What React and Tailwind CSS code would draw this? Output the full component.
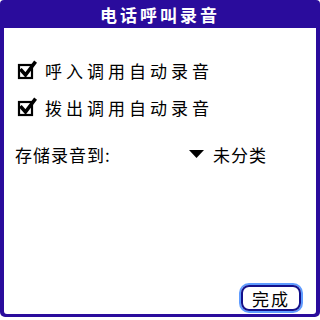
import React from "react";

function Check() {
  return (
    <svg width="20" height="20" viewBox="0 0 20 20" className="shrink-0">
      <rect x="2" y="5" width="13" height="13" fill="white" stroke="black" strokeWidth="2.2" />
      <path d="M4.5 10.5 L8.5 15 L17.5 3" fill="none" stroke="black" strokeWidth="3.6" strokeLinecap="square" strokeLinejoin="miter" />
    </svg>
  );
}

export default function App() {
  const font = { fontFamily: '"Noto Sans CJK SC", "Noto Sans", sans-serif' };
  return (
    <div className="w-[320px] h-[320px] bg-white" style={font}>
      <div className="h-[317px] flex flex-col bg-[#2a0c9c] rounded-t-[4px] rounded-b-[5px] px-[4px] pb-[3px]">
        <div className="h-[28px] shrink-0 flex items-center justify-center text-white font-bold text-[17px] tracking-[3px] leading-none pt-[1px]">
          电话呼叫录音
        </div>
        <div className="flex-1 bg-white rounded-b-[3px] flex flex-col pl-[11px] pr-[15px] pt-[32px] pb-[3px]">
          <div className="flex items-center gap-[8px] h-[20px] pl-[2px]">
            <Check />
            <span className="text-[17px] tracking-[4px] leading-none text-black">呼入调用自动录音</span>
          </div>
          <div className="flex items-center gap-[8px] h-[20px] mt-[17px] pl-[2px]">
            <Check />
            <span className="text-[17px] tracking-[4px] leading-none text-black">拨出调用自动录音</span>
          </div>
          <div className="flex items-center h-[20px] mt-[27px]">
            <span className="w-[174px] text-[17px] tracking-[1px] leading-none text-black">存储录音到:</span>
            <svg width="15" height="8" viewBox="0 0 15 8" className="shrink-0">
              <path d="M0 0 H15 L7.5 8 Z" fill="black" />
            </svg>
            <span className="ml-[9px] text-[17px] tracking-[1px] leading-none text-black">未分类</span>
          </div>
          <div className="flex-1" />
          <div className="flex justify-end">
            <div className="w-[60px] h-[26px] flex items-center justify-center border-2 border-[#14108a] rounded-[8px] shadow-[0_0_0_2px_#5f9cff] text-[17px] tracking-[2px] leading-none text-black">
              完成
            </div>
          </div>
        </div>
      </div>
    </div>
  );
}
